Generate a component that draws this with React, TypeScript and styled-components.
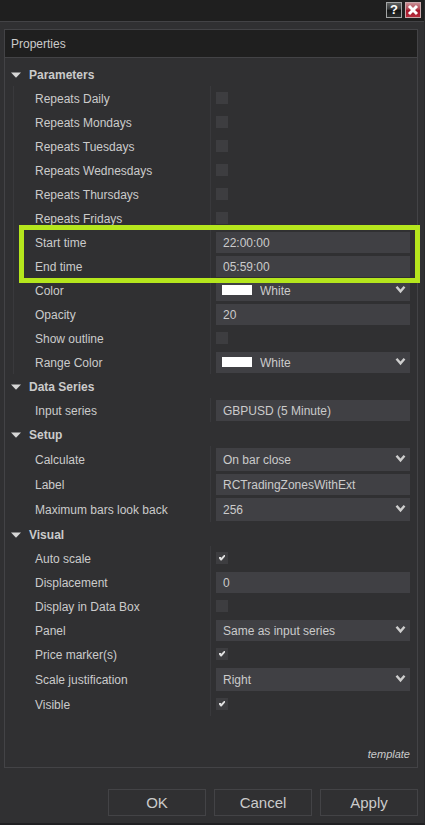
import React, { useId, useState } from "react";
import styled, { createGlobalStyle } from "styled-components";

const color = {
  window: "#303032",
  bar: "#1f1f1f",
  line: "#434346",
  faint: "#39393c",
  field: "#404044",
  tick: "#3d3d40",
  text: "#cbcbcb",
  accent: "#b5e61d",
};

const GlobalStyle = createGlobalStyle`
  *, *::before, *::after { box-sizing: border-box; }
  body { margin: 0; background: ${color.window}; }
  body, button, input, select {
    font-family: "Liberation Sans", Arial, sans-serif;
    font-size: 12px;
    color: ${color.text};
  }
`;

const Window = styled.main`
  display: flex;
  flex-direction: column;
  min-height: 100vh;
  background: ${color.window};
  border-right: 1px solid #29292b;
  border-bottom: 2px solid #202022;
`;

const TitleBar = styled.header`
  display: flex;
  justify-content: flex-end;
  gap: 3px;
  height: 22px;
  padding: 2px 3px 0 0;
  background: ${color.bar};
  border-bottom: 1px solid ${color.line};
`;

const CaptionButton = styled.button<{ $danger?: boolean }>`
  display: grid;
  place-items: center;
  width: 16px;
  height: 16px;
  padding: 0;
  border: 1px solid ${(p) => (p.$danger ? "#c9a9ac" : "#a3a5a5")};
  background: ${(p) =>
    p.$danger
      ? "linear-gradient(#c98d94 0%, #b34450 45%, #a3152a 50%, #b52c3c 100%)"
      : "linear-gradient(#5e6060 0%, #343636 45%, #121414 50%, #2a2c2c 100%)"};
  color: #fff;
  font-size: 13px;
  font-weight: bold;
  line-height: 14px;
`;

const Panel = styled.section`
  display: flex;
  flex: 1;
  flex-direction: column;
  margin: 7px 6px 0 4px;
  border: 1px solid ${color.line};
`;

const PanelTitle = styled.h1`
  margin: 0;
  padding: 0 6px;
  height: 28px;
  line-height: 28px;
  font-size: 12px;
  font-weight: normal;
  background: ${color.bar};
  border-bottom: 1px solid ${color.line};
`;

const Groups = styled.div`
  padding-top: 4px;
`;

const GroupButton = styled.button`
  display: flex;
  align-items: center;
  gap: 8px;
  width: 100%;
  height: 24px;
  padding: 2px 6px 0;
  border: 0;
  background: none;
  font-weight: bold;
  text-align: left;
`;

const Arrow = styled.svg<{ $open: boolean }>`
  width: 10px;
  height: 6px;
  transform: rotate(${(p) => (p.$open ? 0 : -90)}deg);
`;

const GroupBody = styled.div<{ $ruled: boolean }>`
  margin-left: 8px;
  border-left: 1px solid ${(p) => (p.$ruled ? color.faint : "transparent")};
`;

const Row = styled.div<{ $tall?: boolean }>`
  display: grid;
  grid-template-columns: 197fr 199fr;
  height: ${(p) => (p.$tall ? 26 : 24)}px;
  padding-right: 7px;
`;

const RowLabel = styled.label`
  display: flex;
  align-items: center;
  padding: 2px 0 0 21px;
  border-right: 1px solid ${color.faint};
  white-space: nowrap;
`;

const ValueCell = styled.div`
  display: grid;
  align-items: center;
  padding: 2px 0 1px 5px;
`;

const TickCell = styled.div`
  display: flex;
  align-items: center;
  padding-left: 5px;
`;

const TextField = styled.input`
  width: 100%;
  min-width: 0;
  height: 100%;
  padding: 0 7px;
  border: 0;
  border-radius: 0;
  background: ${color.field};
`;

const SelectBox = styled.div`
  position: relative;
  height: 100%;
`;

const SelectField = styled.select<{ $swatch: boolean }>`
  display: block;
  width: 100%;
  height: 100%;
  padding: 0 20px 0 ${(p) => (p.$swatch ? 44 : 7)}px;
  border: 0;
  border-radius: 0;
  appearance: none;
  background: ${color.field};
`;

const Swatch = styled.span`
  position: absolute;
  top: 5px;
  left: 6px;
  width: 30px;
  height: 10px;
  background: #fff;
  pointer-events: none;
`;

const Chevron = styled.svg`
  position: absolute;
  top: 0;
  bottom: 2px;
  right: 4px;
  width: 11px;
  height: 9px;
  margin: auto 0;
  pointer-events: none;
`;

const TickBox = styled.span`
  position: relative;
  display: block;
  width: 12px;
  height: 12px;
`;

const TickInput = styled.input`
  display: block;
  width: 12px;
  height: 12px;
  margin: 0;
  appearance: none;
  background: ${color.tick};

  & + svg {
    display: none;
  }
  &:checked + svg {
    display: block;
  }
`;

const TickMark = styled.svg`
  position: absolute;
  inset: 0;
  pointer-events: none;
`;

const Highlight = styled.div`
  position: relative;

  &::after {
    content: "";
    position: absolute;
    inset: -5px -3px -5px 5px;
    z-index: 1;
    border: 5px solid ${color.accent};
    pointer-events: none;
  }
`;

const PanelFooter = styled.div`
  display: flex;
  justify-content: flex-end;
  margin-top: auto;
  padding: 0 7px 6px;
`;

const TemplateLink = styled.a`
  font-size: 11px;
  line-height: 14px;
  font-style: italic;
  color: inherit;
  text-decoration: none;
`;

const Actions = styled.footer`
  display: flex;
  justify-content: flex-end;
  gap: 8px;
  padding: 21px 6px 7px;
`;

const ActionButton = styled.button`
  width: 98px;
  height: 27px;
  padding: 0;
  border: 1px solid ${color.line};
  background: none;
  font-size: 15px;
`;

type FieldProps = { label: string; value: string; tall?: boolean };

function TextRow({ label, value }: FieldProps) {
  const id = useId();
  return (
    <Row>
      <RowLabel htmlFor={id}>{label}</RowLabel>
      <ValueCell>
        <TextField id={id} type="text" defaultValue={value} />
      </ValueCell>
    </Row>
  );
}

function SelectRow({ label, value, tall, swatch = false }: FieldProps & { swatch?: boolean }) {
  const id = useId();
  return (
    <Row $tall={tall}>
      <RowLabel htmlFor={id}>{label}</RowLabel>
      <ValueCell>
        <SelectBox>
          <SelectField id={id} $swatch={swatch} defaultValue={value}>
            <option>{value}</option>
          </SelectField>
          {swatch && <Swatch />}
          <Chevron viewBox="0 0 11 9" aria-hidden="true">
            <path d="M1.5 1.8 5.5 6.4 9.5 1.8" fill="none" stroke="#cecece" strokeWidth="2.4" />
          </Chevron>
        </SelectBox>
      </ValueCell>
    </Row>
  );
}

function TickRow({ label, checked = false }: { label: string; checked?: boolean }) {
  const id = useId();
  return (
    <Row>
      <RowLabel htmlFor={id}>{label}</RowLabel>
      <TickCell>
        <TickBox>
          <TickInput id={id} type="checkbox" defaultChecked={checked} />
          <TickMark viewBox="0 0 12 12" aria-hidden="true">
            <path d="M3 5H5V6L8 3H9V4.5L5.6 8.5H4.6L3 6.5Z" fill="#e0e0e0" />
          </TickMark>
        </TickBox>
      </TickCell>
    </Row>
  );
}

type GroupProps = { title: string; ruled?: boolean; children: React.ReactNode };

function Group({ title, ruled = false, children }: GroupProps) {
  const [open, setOpen] = useState(true);
  return (
    <section>
      <GroupButton type="button" aria-expanded={open} onClick={() => setOpen(!open)}>
        <Arrow $open={open} viewBox="0 0 10 6" aria-hidden="true">
          <path d="M0 .5H10L5 5.8Z" fill="#d6d6d6" />
        </Arrow>
        {title}
      </GroupButton>
      {open && <GroupBody $ruled={ruled}>{children}</GroupBody>}
    </section>
  );
}

const repeatDays = ["Daily", "Mondays", "Tuesdays", "Wednesdays", "Thursdays", "Fridays"];

export default function App() {
  return (
    <>
      <GlobalStyle />
      <Window>
        <TitleBar>
          <CaptionButton type="button" aria-label="Help">?</CaptionButton>
          <CaptionButton type="button" aria-label="Close" $danger>
            <svg width="12" height="12" viewBox="0 0 12 12" aria-hidden="true">
              <path d="M2 2 10 10M10 2 2 10" stroke="#fff" strokeWidth="3" />
            </svg>
          </CaptionButton>
        </TitleBar>

        <Panel>
          <PanelTitle>Properties</PanelTitle>
          <Groups>
            <Group title="Parameters" ruled>
              {repeatDays.map((day) => (
                <TickRow key={day} label={`Repeats ${day}`} />
              ))}
              <Highlight>
                <TextRow label="Start time" value="22:00:00" />
                <TextRow label="End time" value="05:59:00" />
              </Highlight>
              <SelectRow label="Color" value="White" swatch />
              <TextRow label="Opacity" value="20" />
              <TickRow label="Show outline" />
              <SelectRow label="Range Color" value="White" swatch />
            </Group>
            <Group title="Data Series">
              <TextRow label="Input series" value="GBPUSD (5 Minute)" />
            </Group>
            <Group title="Setup">
              <SelectRow label="Calculate" value="On bar close" tall />
              <TextRow label="Label" value="RCTradingZonesWithExt" />
              <SelectRow label="Maximum bars look back" value="256" tall />
            </Group>
            <Group title="Visual">
              <TickRow label="Auto scale" checked />
              <TextRow label="Displacement" value="0" />
              <TickRow label="Display in Data Box" />
              <SelectRow label="Panel" value="Same as input series" />
              <TickRow label="Price marker(s)" checked />
              <SelectRow label="Scale justification" value="Right" tall />
              <TickRow label="Visible" checked />
            </Group>
          </Groups>
          <PanelFooter>
            <TemplateLink href="#template">template</TemplateLink>
          </PanelFooter>
        </Panel>

        <Actions>
          <ActionButton type="button">OK</ActionButton>
          <ActionButton type="button">Cancel</ActionButton>
          <ActionButton type="button">Apply</ActionButton>
        </Actions>
      </Window>
    </>
  );
}
